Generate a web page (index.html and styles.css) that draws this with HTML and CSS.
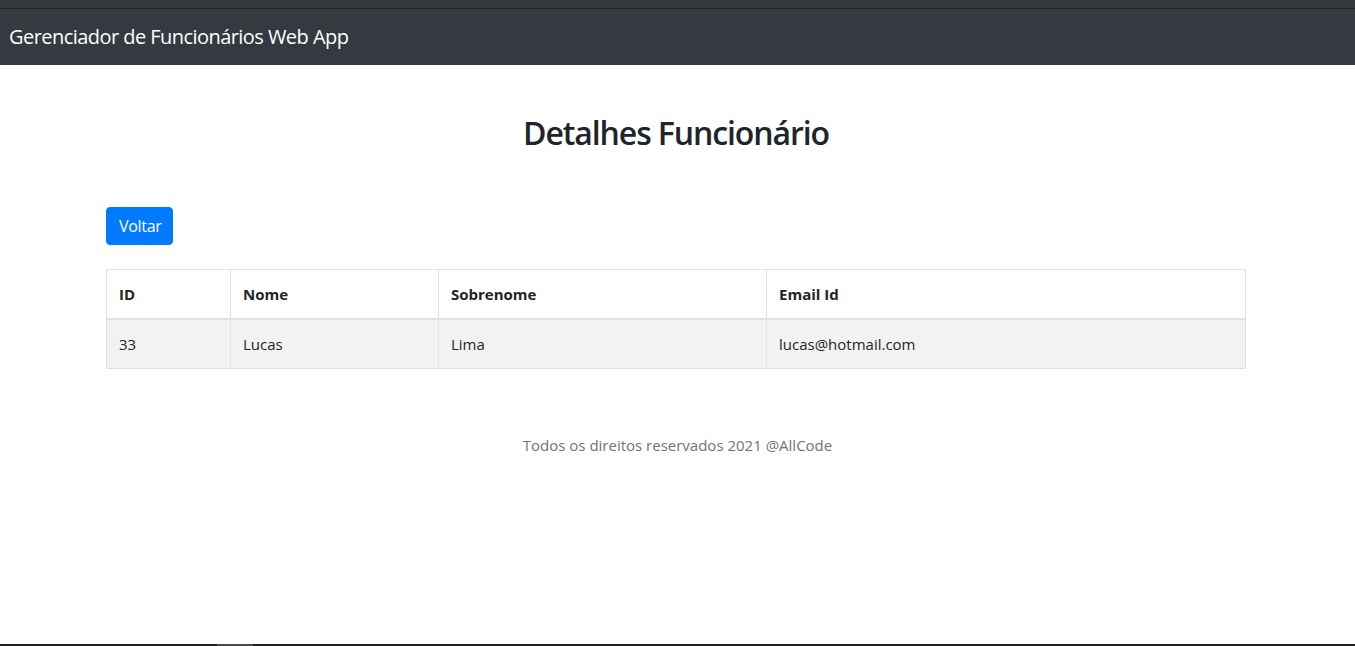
FILE: index.html
```html
<!DOCTYPE html>
<html lang="pt">
<head>
<meta charset="utf-8">
<title>Gerenciador de Funcionários</title>
<link rel="stylesheet" href="styles.css">
</head>
<body>
<div class="topstrip"></div>
<header class="navbar">
  <span class="brand">Gerenciador de Funcionários Web App</span>
</header>
<main class="container">
  <h2 class="title">Detalhes Funcionário</h2>
  <button class="btn">Voltar</button>
  <table class="table">
    <thead>
      <tr>
        <th class="c1">ID</th>
        <th class="c2">Nome</th>
        <th class="c3">Sobrenome</th>
        <th class="c4">Email Id</th>
      </tr>
    </thead>
    <tbody>
      <tr>
        <td>33</td>
        <td>Lucas</td>
        <td>Lima</td>
        <td>lucas@hotmail.com</td>
      </tr>
    </tbody>
  </table>
</main>
<footer class="footer">Todos os direitos reservados 2021 @AllCode</footer>
<div class="bottombar"><span class="bottomseg"></span></div>
</body>
</html>
```
FILE: styles.css
```css
* { box-sizing: border-box; }
html, body { margin: 0; padding: 0; }
body {
  font-family: "Open Sans", "Noto Sans", sans-serif;
  font-size: 16px;
  line-height: 1.5;
  color: #212529;
  background: #fff;
  height: 646px;
  overflow: hidden;
}
.topstrip {
  height: 9px;
  background: #36373b;
  border-bottom: 1px solid #232427;
}
.navbar {
  height: 56px;
  background: #343a40;
  display: flex;
  align-items: center;
  padding: 0 9px;
}
.brand {
  color: #fff;
  font-size: 20px;
  letter-spacing: -0.55px;
}
.container {
  width: 1140px;
  margin: 0 0 0 106px;
  padding-top: 49px;
}
.title {
  margin: 0 0 55px;
  text-align: center;
  font-size: 32px;
  font-weight: 600;
  line-height: 38px;
  letter-spacing: -1.1px;
}
.btn {
  display: block;
  font-family: inherit;
  font-size: 16px;
  line-height: 24px;
  color: #fff;
  background: #007bff;
  border: 1px solid #007bff;
  border-radius: 4px;
  padding: 6px 12px;
  width: 67px;
  height: 38px;
  letter-spacing: -0.3px;
}
.table {
  margin-top: 24px;
  width: 100%;
  border-collapse: collapse;
  border: 1px solid #dee2e6;
}
.table th, .table td {
  border: 1px solid #dee2e6;
  padding: 12px 12px;
  text-align: left;
  line-height: 24px;
  font-size: 15px;
}
.table th { font-weight: 700; border-bottom-width: 2px; height: 49px; }
.table td { height: 48px; }
.table tbody tr { background: #f2f2f2; }
.c1 { width: 124px; }
.c2 { width: 208px; }
.c3 { width: 328px; }
.footer {
  text-align: center;
  color: #6c757d;
  font-size: 15px;
  margin-top: 64px;
  line-height: 24px;
}
.bottombar {
  position: fixed;
  left: 0;
  right: 0;
  bottom: 0;
  height: 2px;
  background: #1f1f1f;
}
.bottomseg {
  position: absolute;
  left: 217px;
  width: 36px;
  top: 0;
  bottom: 0;
  background: #4a4a4a;
}
```
